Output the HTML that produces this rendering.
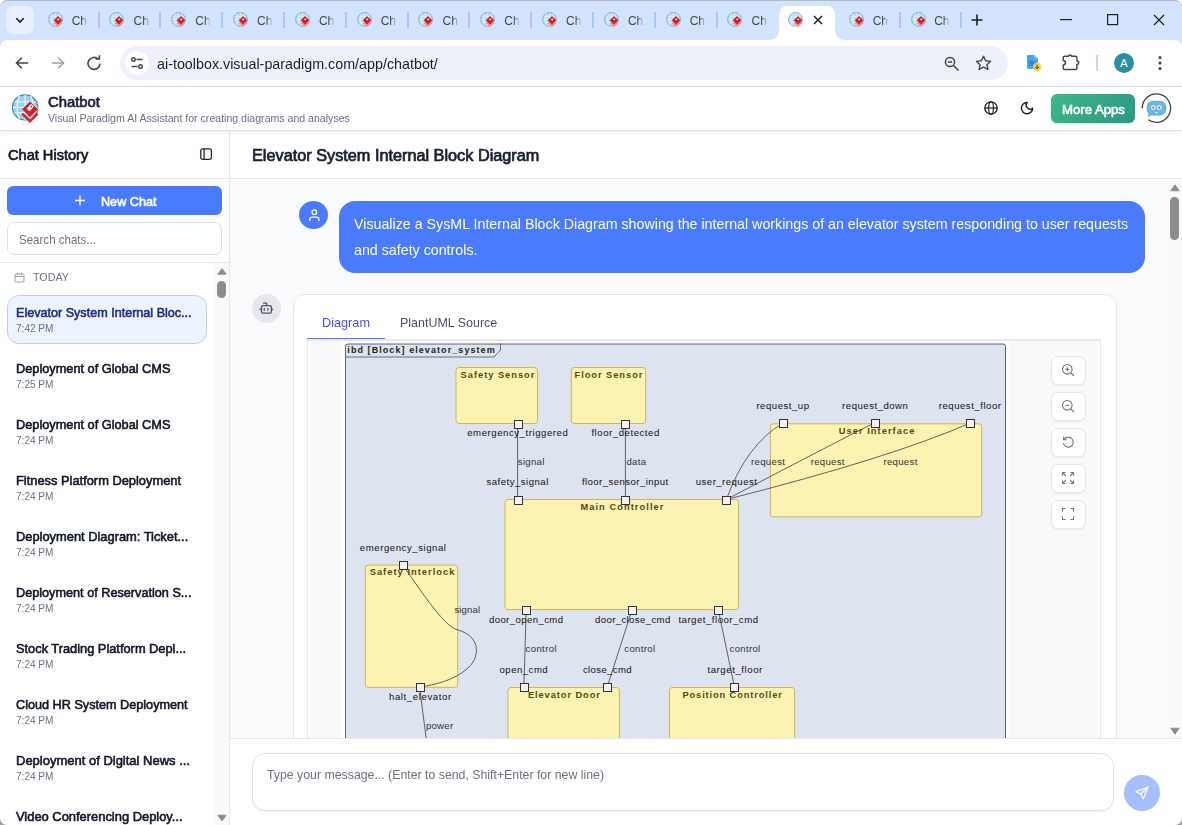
<!DOCTYPE html>
<html><head><meta charset="utf-8">
<style>
*{box-sizing:border-box;margin:0;padding:0}
html,body{width:1182px;height:825px;overflow:hidden;background:#fff;font-family:"Liberation Sans",sans-serif}
body{position:relative}
.abs{position:absolute}
.t{position:absolute;white-space:nowrap;font-family:"Liberation Sans",sans-serif}
.tsep{position:absolute;top:12px;width:2px;height:16px;background:#a8c7fa}
</style></head>
<body>
<div class="abs" style="left:0;top:0;width:1182px;height:48px;background:#d3e3fd;border-top:1.5px solid #b4b9c0;border-radius:7px 7px 0 0"></div>
<div class="abs" style="left:6px;top:6px;width:28px;height:28px;border-radius:8px;background:#e7effc"></div>
<svg class="abs" style="left:14px;top:14px" width="12" height="12" viewBox="0 0 12 12"><path d="M2.3 4.3 L6 8 L9.7 4.3" stroke="#1f1f1f" stroke-width="1.6" fill="none"/></svg>
<div class="abs" style="left:47.5px;top:12px;width:15px;height:15px"><svg width="15" height="15" viewBox="0 0 15 15"><circle cx="7.5" cy="7.4" r="6.9" fill="#b5e0f6" stroke="#8aa6b5" stroke-width="0.9"/><path d="M2.5 4.5h10M1.2 7.5h12.5M2.5 10.5h10M7.5 0.8v13.3M4.3 1.8c-1.2 3-1.2 8.3 0 11.3M10.7 1.8c1.2 3 1.2 8.3 0 11.3" stroke="#e3f4fc" stroke-width="0.7" fill="none"/><path d="M10 6.8 L14.3 11 L10 15 L5.8 11Z" fill="#ec9090"/><path d="M10 4.1 L14.3 8.3 L10 12.5 L5.7 8.3Z" fill="#d11f2b"/><path d="M10 6.2 L11.4 7.6 L10.4 8.6 L9 7.2Z" fill="#fff"/></svg></div>
<div class="abs" style="left:71.7px;top:12px;width:16px;height:16px;overflow:hidden;-webkit-mask-image:linear-gradient(to right,#000 60%,transparent 100%)"><div class="t" style="left:0px;top:3.24px;font-size:12px;line-height:12px;color:#474747;font-weight:normal;">Ch</div></div>
<div class="abs tsep" style="left:97.5px"></div>
<div class="abs" style="left:109.3px;top:12px;width:15px;height:15px"><svg width="15" height="15" viewBox="0 0 15 15"><circle cx="7.5" cy="7.4" r="6.9" fill="#b5e0f6" stroke="#8aa6b5" stroke-width="0.9"/><path d="M2.5 4.5h10M1.2 7.5h12.5M2.5 10.5h10M7.5 0.8v13.3M4.3 1.8c-1.2 3-1.2 8.3 0 11.3M10.7 1.8c1.2 3 1.2 8.3 0 11.3" stroke="#e3f4fc" stroke-width="0.7" fill="none"/><path d="M10 6.8 L14.3 11 L10 15 L5.8 11Z" fill="#ec9090"/><path d="M10 4.1 L14.3 8.3 L10 12.5 L5.7 8.3Z" fill="#d11f2b"/><path d="M10 6.2 L11.4 7.6 L10.4 8.6 L9 7.2Z" fill="#fff"/></svg></div>
<div class="abs" style="left:133.5px;top:12px;width:16px;height:16px;overflow:hidden;-webkit-mask-image:linear-gradient(to right,#000 60%,transparent 100%)"><div class="t" style="left:0px;top:3.24px;font-size:12px;line-height:12px;color:#474747;font-weight:normal;">Ch</div></div>
<div class="abs tsep" style="left:159.3px"></div>
<div class="abs" style="left:171.1px;top:12px;width:15px;height:15px"><svg width="15" height="15" viewBox="0 0 15 15"><circle cx="7.5" cy="7.4" r="6.9" fill="#b5e0f6" stroke="#8aa6b5" stroke-width="0.9"/><path d="M2.5 4.5h10M1.2 7.5h12.5M2.5 10.5h10M7.5 0.8v13.3M4.3 1.8c-1.2 3-1.2 8.3 0 11.3M10.7 1.8c1.2 3 1.2 8.3 0 11.3" stroke="#e3f4fc" stroke-width="0.7" fill="none"/><path d="M10 6.8 L14.3 11 L10 15 L5.8 11Z" fill="#ec9090"/><path d="M10 4.1 L14.3 8.3 L10 12.5 L5.7 8.3Z" fill="#d11f2b"/><path d="M10 6.2 L11.4 7.6 L10.4 8.6 L9 7.2Z" fill="#fff"/></svg></div>
<div class="abs" style="left:195.3px;top:12px;width:16px;height:16px;overflow:hidden;-webkit-mask-image:linear-gradient(to right,#000 60%,transparent 100%)"><div class="t" style="left:0px;top:3.24px;font-size:12px;line-height:12px;color:#474747;font-weight:normal;">Ch</div></div>
<div class="abs tsep" style="left:221.1px"></div>
<div class="abs" style="left:232.9px;top:12px;width:15px;height:15px"><svg width="15" height="15" viewBox="0 0 15 15"><circle cx="7.5" cy="7.4" r="6.9" fill="#b5e0f6" stroke="#8aa6b5" stroke-width="0.9"/><path d="M2.5 4.5h10M1.2 7.5h12.5M2.5 10.5h10M7.5 0.8v13.3M4.3 1.8c-1.2 3-1.2 8.3 0 11.3M10.7 1.8c1.2 3 1.2 8.3 0 11.3" stroke="#e3f4fc" stroke-width="0.7" fill="none"/><path d="M10 6.8 L14.3 11 L10 15 L5.8 11Z" fill="#ec9090"/><path d="M10 4.1 L14.3 8.3 L10 12.5 L5.7 8.3Z" fill="#d11f2b"/><path d="M10 6.2 L11.4 7.6 L10.4 8.6 L9 7.2Z" fill="#fff"/></svg></div>
<div class="abs" style="left:257.1px;top:12px;width:16px;height:16px;overflow:hidden;-webkit-mask-image:linear-gradient(to right,#000 60%,transparent 100%)"><div class="t" style="left:0px;top:3.24px;font-size:12px;line-height:12px;color:#474747;font-weight:normal;">Ch</div></div>
<div class="abs tsep" style="left:282.9px"></div>
<div class="abs" style="left:294.7px;top:12px;width:15px;height:15px"><svg width="15" height="15" viewBox="0 0 15 15"><circle cx="7.5" cy="7.4" r="6.9" fill="#b5e0f6" stroke="#8aa6b5" stroke-width="0.9"/><path d="M2.5 4.5h10M1.2 7.5h12.5M2.5 10.5h10M7.5 0.8v13.3M4.3 1.8c-1.2 3-1.2 8.3 0 11.3M10.7 1.8c1.2 3 1.2 8.3 0 11.3" stroke="#e3f4fc" stroke-width="0.7" fill="none"/><path d="M10 6.8 L14.3 11 L10 15 L5.8 11Z" fill="#ec9090"/><path d="M10 4.1 L14.3 8.3 L10 12.5 L5.7 8.3Z" fill="#d11f2b"/><path d="M10 6.2 L11.4 7.6 L10.4 8.6 L9 7.2Z" fill="#fff"/></svg></div>
<div class="abs" style="left:318.9px;top:12px;width:16px;height:16px;overflow:hidden;-webkit-mask-image:linear-gradient(to right,#000 60%,transparent 100%)"><div class="t" style="left:0px;top:3.24px;font-size:12px;line-height:12px;color:#474747;font-weight:normal;">Ch</div></div>
<div class="abs tsep" style="left:344.7px"></div>
<div class="abs" style="left:356.5px;top:12px;width:15px;height:15px"><svg width="15" height="15" viewBox="0 0 15 15"><circle cx="7.5" cy="7.4" r="6.9" fill="#b5e0f6" stroke="#8aa6b5" stroke-width="0.9"/><path d="M2.5 4.5h10M1.2 7.5h12.5M2.5 10.5h10M7.5 0.8v13.3M4.3 1.8c-1.2 3-1.2 8.3 0 11.3M10.7 1.8c1.2 3 1.2 8.3 0 11.3" stroke="#e3f4fc" stroke-width="0.7" fill="none"/><path d="M10 6.8 L14.3 11 L10 15 L5.8 11Z" fill="#ec9090"/><path d="M10 4.1 L14.3 8.3 L10 12.5 L5.7 8.3Z" fill="#d11f2b"/><path d="M10 6.2 L11.4 7.6 L10.4 8.6 L9 7.2Z" fill="#fff"/></svg></div>
<div class="abs" style="left:380.7px;top:12px;width:16px;height:16px;overflow:hidden;-webkit-mask-image:linear-gradient(to right,#000 60%,transparent 100%)"><div class="t" style="left:0px;top:3.24px;font-size:12px;line-height:12px;color:#474747;font-weight:normal;">Ch</div></div>
<div class="abs tsep" style="left:406.5px"></div>
<div class="abs" style="left:418.3px;top:12px;width:15px;height:15px"><svg width="15" height="15" viewBox="0 0 15 15"><circle cx="7.5" cy="7.4" r="6.9" fill="#b5e0f6" stroke="#8aa6b5" stroke-width="0.9"/><path d="M2.5 4.5h10M1.2 7.5h12.5M2.5 10.5h10M7.5 0.8v13.3M4.3 1.8c-1.2 3-1.2 8.3 0 11.3M10.7 1.8c1.2 3 1.2 8.3 0 11.3" stroke="#e3f4fc" stroke-width="0.7" fill="none"/><path d="M10 6.8 L14.3 11 L10 15 L5.8 11Z" fill="#ec9090"/><path d="M10 4.1 L14.3 8.3 L10 12.5 L5.7 8.3Z" fill="#d11f2b"/><path d="M10 6.2 L11.4 7.6 L10.4 8.6 L9 7.2Z" fill="#fff"/></svg></div>
<div class="abs" style="left:442.5px;top:12px;width:16px;height:16px;overflow:hidden;-webkit-mask-image:linear-gradient(to right,#000 60%,transparent 100%)"><div class="t" style="left:0px;top:3.24px;font-size:12px;line-height:12px;color:#474747;font-weight:normal;">Ch</div></div>
<div class="abs tsep" style="left:468.3px"></div>
<div class="abs" style="left:480.1px;top:12px;width:15px;height:15px"><svg width="15" height="15" viewBox="0 0 15 15"><circle cx="7.5" cy="7.4" r="6.9" fill="#b5e0f6" stroke="#8aa6b5" stroke-width="0.9"/><path d="M2.5 4.5h10M1.2 7.5h12.5M2.5 10.5h10M7.5 0.8v13.3M4.3 1.8c-1.2 3-1.2 8.3 0 11.3M10.7 1.8c1.2 3 1.2 8.3 0 11.3" stroke="#e3f4fc" stroke-width="0.7" fill="none"/><path d="M10 6.8 L14.3 11 L10 15 L5.8 11Z" fill="#ec9090"/><path d="M10 4.1 L14.3 8.3 L10 12.5 L5.7 8.3Z" fill="#d11f2b"/><path d="M10 6.2 L11.4 7.6 L10.4 8.6 L9 7.2Z" fill="#fff"/></svg></div>
<div class="abs" style="left:504.3px;top:12px;width:16px;height:16px;overflow:hidden;-webkit-mask-image:linear-gradient(to right,#000 60%,transparent 100%)"><div class="t" style="left:0px;top:3.24px;font-size:12px;line-height:12px;color:#474747;font-weight:normal;">Ch</div></div>
<div class="abs tsep" style="left:530.1px"></div>
<div class="abs" style="left:541.9px;top:12px;width:15px;height:15px"><svg width="15" height="15" viewBox="0 0 15 15"><circle cx="7.5" cy="7.4" r="6.9" fill="#b5e0f6" stroke="#8aa6b5" stroke-width="0.9"/><path d="M2.5 4.5h10M1.2 7.5h12.5M2.5 10.5h10M7.5 0.8v13.3M4.3 1.8c-1.2 3-1.2 8.3 0 11.3M10.7 1.8c1.2 3 1.2 8.3 0 11.3" stroke="#e3f4fc" stroke-width="0.7" fill="none"/><path d="M10 6.8 L14.3 11 L10 15 L5.8 11Z" fill="#ec9090"/><path d="M10 4.1 L14.3 8.3 L10 12.5 L5.7 8.3Z" fill="#d11f2b"/><path d="M10 6.2 L11.4 7.6 L10.4 8.6 L9 7.2Z" fill="#fff"/></svg></div>
<div class="abs" style="left:566.1px;top:12px;width:16px;height:16px;overflow:hidden;-webkit-mask-image:linear-gradient(to right,#000 60%,transparent 100%)"><div class="t" style="left:0px;top:3.24px;font-size:12px;line-height:12px;color:#474747;font-weight:normal;">Ch</div></div>
<div class="abs tsep" style="left:591.9px"></div>
<div class="abs" style="left:603.7px;top:12px;width:15px;height:15px"><svg width="15" height="15" viewBox="0 0 15 15"><circle cx="7.5" cy="7.4" r="6.9" fill="#b5e0f6" stroke="#8aa6b5" stroke-width="0.9"/><path d="M2.5 4.5h10M1.2 7.5h12.5M2.5 10.5h10M7.5 0.8v13.3M4.3 1.8c-1.2 3-1.2 8.3 0 11.3M10.7 1.8c1.2 3 1.2 8.3 0 11.3" stroke="#e3f4fc" stroke-width="0.7" fill="none"/><path d="M10 6.8 L14.3 11 L10 15 L5.8 11Z" fill="#ec9090"/><path d="M10 4.1 L14.3 8.3 L10 12.5 L5.7 8.3Z" fill="#d11f2b"/><path d="M10 6.2 L11.4 7.6 L10.4 8.6 L9 7.2Z" fill="#fff"/></svg></div>
<div class="abs" style="left:627.9px;top:12px;width:16px;height:16px;overflow:hidden;-webkit-mask-image:linear-gradient(to right,#000 60%,transparent 100%)"><div class="t" style="left:0px;top:3.24px;font-size:12px;line-height:12px;color:#474747;font-weight:normal;">Ch</div></div>
<div class="abs tsep" style="left:653.7px"></div>
<div class="abs" style="left:665.5px;top:12px;width:15px;height:15px"><svg width="15" height="15" viewBox="0 0 15 15"><circle cx="7.5" cy="7.4" r="6.9" fill="#b5e0f6" stroke="#8aa6b5" stroke-width="0.9"/><path d="M2.5 4.5h10M1.2 7.5h12.5M2.5 10.5h10M7.5 0.8v13.3M4.3 1.8c-1.2 3-1.2 8.3 0 11.3M10.7 1.8c1.2 3 1.2 8.3 0 11.3" stroke="#e3f4fc" stroke-width="0.7" fill="none"/><path d="M10 6.8 L14.3 11 L10 15 L5.8 11Z" fill="#ec9090"/><path d="M10 4.1 L14.3 8.3 L10 12.5 L5.7 8.3Z" fill="#d11f2b"/><path d="M10 6.2 L11.4 7.6 L10.4 8.6 L9 7.2Z" fill="#fff"/></svg></div>
<div class="abs" style="left:689.7px;top:12px;width:16px;height:16px;overflow:hidden;-webkit-mask-image:linear-gradient(to right,#000 60%,transparent 100%)"><div class="t" style="left:0px;top:3.24px;font-size:12px;line-height:12px;color:#474747;font-weight:normal;">Ch</div></div>
<div class="abs tsep" style="left:715.5px"></div>
<div class="abs" style="left:727.3px;top:12px;width:15px;height:15px"><svg width="15" height="15" viewBox="0 0 15 15"><circle cx="7.5" cy="7.4" r="6.9" fill="#b5e0f6" stroke="#8aa6b5" stroke-width="0.9"/><path d="M2.5 4.5h10M1.2 7.5h12.5M2.5 10.5h10M7.5 0.8v13.3M4.3 1.8c-1.2 3-1.2 8.3 0 11.3M10.7 1.8c1.2 3 1.2 8.3 0 11.3" stroke="#e3f4fc" stroke-width="0.7" fill="none"/><path d="M10 6.8 L14.3 11 L10 15 L5.8 11Z" fill="#ec9090"/><path d="M10 4.1 L14.3 8.3 L10 12.5 L5.7 8.3Z" fill="#d11f2b"/><path d="M10 6.2 L11.4 7.6 L10.4 8.6 L9 7.2Z" fill="#fff"/></svg></div>
<div class="abs" style="left:751.5px;top:12px;width:16px;height:16px;overflow:hidden;-webkit-mask-image:linear-gradient(to right,#000 60%,transparent 100%)"><div class="t" style="left:0px;top:3.24px;font-size:12px;line-height:12px;color:#474747;font-weight:normal;">Ch</div></div>
<svg class="abs" style="left:768px;top:5px" width="80" height="36" viewBox="0 0 80 36"><path d="M0 35 Q10 35 11 26 L11 10 Q11 1 20 1 L58 1 Q67 1 67 10 L67 26 Q68 35 78 35 L80 36 L0 36Z" fill="#fff"/></svg>
<div class="abs" style="left:788px;top:12px;width:15px;height:15px"><svg width="15" height="15" viewBox="0 0 15 15"><circle cx="7.5" cy="7.4" r="6.9" fill="#b5e0f6" stroke="#8aa6b5" stroke-width="0.9"/><path d="M2.5 4.5h10M1.2 7.5h12.5M2.5 10.5h10M7.5 0.8v13.3M4.3 1.8c-1.2 3-1.2 8.3 0 11.3M10.7 1.8c1.2 3 1.2 8.3 0 11.3" stroke="#e3f4fc" stroke-width="0.7" fill="none"/><path d="M10 6.8 L14.3 11 L10 15 L5.8 11Z" fill="#ec9090"/><path d="M10 4.1 L14.3 8.3 L10 12.5 L5.7 8.3Z" fill="#d11f2b"/><path d="M10 6.2 L11.4 7.6 L10.4 8.6 L9 7.2Z" fill="#fff"/></svg></div>
<svg class="abs" style="left:813px;top:15px" width="10" height="10" viewBox="0 0 10 10"><path d="M1 1L9 9M9 1L1 9" stroke="#1f1f1f" stroke-width="1.5"/></svg>
<div class="abs" style="left:849px;top:12px;width:15px;height:15px"><svg width="15" height="15" viewBox="0 0 15 15"><circle cx="7.5" cy="7.4" r="6.9" fill="#b5e0f6" stroke="#8aa6b5" stroke-width="0.9"/><path d="M2.5 4.5h10M1.2 7.5h12.5M2.5 10.5h10M7.5 0.8v13.3M4.3 1.8c-1.2 3-1.2 8.3 0 11.3M10.7 1.8c1.2 3 1.2 8.3 0 11.3" stroke="#e3f4fc" stroke-width="0.7" fill="none"/><path d="M10 6.8 L14.3 11 L10 15 L5.8 11Z" fill="#ec9090"/><path d="M10 4.1 L14.3 8.3 L10 12.5 L5.7 8.3Z" fill="#d11f2b"/><path d="M10 6.2 L11.4 7.6 L10.4 8.6 L9 7.2Z" fill="#fff"/></svg></div>
<div class="abs" style="left:872.7px;top:12px;width:16px;height:16px;overflow:hidden;-webkit-mask-image:linear-gradient(to right,#000 60%,transparent 100%)"><div class="t" style="left:0px;top:3.24px;font-size:12px;line-height:12px;color:#474747;font-weight:normal;">Ch</div></div>
<div class="abs tsep" style="left:898.5px"></div>
<div class="abs" style="left:910.5px;top:12px;width:15px;height:15px"><svg width="15" height="15" viewBox="0 0 15 15"><circle cx="7.5" cy="7.4" r="6.9" fill="#b5e0f6" stroke="#8aa6b5" stroke-width="0.9"/><path d="M2.5 4.5h10M1.2 7.5h12.5M2.5 10.5h10M7.5 0.8v13.3M4.3 1.8c-1.2 3-1.2 8.3 0 11.3M10.7 1.8c1.2 3 1.2 8.3 0 11.3" stroke="#e3f4fc" stroke-width="0.7" fill="none"/><path d="M10 6.8 L14.3 11 L10 15 L5.8 11Z" fill="#ec9090"/><path d="M10 4.1 L14.3 8.3 L10 12.5 L5.7 8.3Z" fill="#d11f2b"/><path d="M10 6.2 L11.4 7.6 L10.4 8.6 L9 7.2Z" fill="#fff"/></svg></div>
<div class="abs" style="left:934.2px;top:12px;width:16px;height:16px;overflow:hidden;-webkit-mask-image:linear-gradient(to right,#000 60%,transparent 100%)"><div class="t" style="left:0px;top:3.24px;font-size:12px;line-height:12px;color:#474747;font-weight:normal;">Ch</div></div>
<div class="abs tsep" style="left:960.0px"></div>
<svg class="abs" style="left:970px;top:13px" width="14" height="14" viewBox="0 0 14 14"><path d="M7 1.5V12.5M1.5 7H12.5" stroke="#1f1f1f" stroke-width="1.6"/></svg>
<svg class="abs" style="left:1060px;top:19px" width="14" height="2"><rect width="12" height="1.2" fill="#1f1f1f"/></svg>
<svg class="abs" style="left:1107px;top:14px" width="12" height="12"><rect x="0.6" y="0.6" width="10" height="10" fill="none" stroke="#1f1f1f" stroke-width="1.2"/></svg>
<svg class="abs" style="left:1153px;top:14px" width="12" height="12" viewBox="0 0 12 12"><path d="M1 1L11 11M11 1L1 11" stroke="#1f1f1f" stroke-width="1.2"/></svg>
<div class="abs" style="left:0;top:40px;width:1182px;height:47px;background:#fff;border-radius:7px 7px 0 0"></div>
<svg class="abs" style="left:13px;top:54px" width="18" height="18" viewBox="0 0 18 18"><path d="M15.2 9H3.5M8.8 3.8L3.5 9l5.3 5.2" stroke="#474747" stroke-width="1.6" fill="none"/></svg>
<svg class="abs" style="left:49px;top:54px" width="18" height="18" viewBox="0 0 18 18"><path d="M2.8 9h11.7M9.2 3.8L14.5 9l-5.3 5.2" stroke="#a3a3a3" stroke-width="1.6" fill="none"/></svg>
<svg class="abs" style="left:85px;top:54px" width="18" height="18" viewBox="0 0 18 18"><path d="M13.3 5.2A6 6 0 1 0 15 9.6" stroke="#474747" stroke-width="1.6" fill="none"/><path d="M10.6 4.9H14.4V1.3" stroke="#474747" stroke-width="1.6" fill="none"/></svg>
<div class="abs" style="left:120px;top:46px;width:888px;height:34px;border-radius:17px;background:#edf2fa"></div>
<div class="abs" style="left:125px;top:51px;width:24px;height:24px;border-radius:12px;background:#fff"></div>
<svg class="abs" style="left:129px;top:55px" width="16" height="16" viewBox="0 0 16 16"><circle cx="4.5" cy="4.5" r="1.8" fill="none" stroke="#474747" stroke-width="1.4"/><path d="M7.5 4.5h6M2.5 11.5h6" stroke="#474747" stroke-width="1.4"/><circle cx="11.5" cy="11.5" r="1.8" fill="none" stroke="#474747" stroke-width="1.4"/></svg>
<div class="t" style="left:157px;top:56.51px;font-size:14.4px;line-height:14.4px;color:#1f1f1f;font-weight:normal;transform:scaleX(0.9945);transform-origin:0 0;">ai-toolbox.visual-paradigm.com/app/chatbot/</div>
<svg class="abs" style="left:944px;top:56px" width="16" height="16" viewBox="0 0 16 16"><circle cx="6" cy="6" r="4.6" fill="none" stroke="#474747" stroke-width="1.5"/><path d="M9.5 9.5L14.5 14.5M3.8 6h4.4" stroke="#474747" stroke-width="1.5"/></svg>
<svg class="abs" style="left:975px;top:55px" width="17" height="16" viewBox="0 0 17 16"><path d="M8.5 1.3l2.1 4.5 4.9.6-3.6 3.3 1 4.8-4.4-2.4-4.4 2.4 1-4.8L1.5 6.4l4.9-.6z" fill="none" stroke="#474747" stroke-width="1.4" stroke-linejoin="round"/></svg>
<svg class="abs" style="left:1026px;top:54px" width="17" height="18" viewBox="0 0 17 18"><path d="M1 2Q1 1 2 1H8.2L12 4.8V14Q12 15 11 15H2Q1 15 1 14Z" fill="#4aa3f0"/><path d="M8.2 1V4.8H12Z" fill="#52e0c4"/><path d="M3 7.5h5M3 9.3h5M3 11.1h4" stroke="#2a5ea8" stroke-width="0.8"/><circle cx="11.2" cy="13" r="4.2" fill="#f5d533"/><path d="M11.2 10.6v4.2M9.4 13l1.8 1.8 1.8-1.8" stroke="#1f3a6b" stroke-width="1" fill="none"/></svg>
<svg class="abs" style="left:1062px;top:54px" width="18" height="17" viewBox="0 0 18 17"><path d="M2.7 2.2H6.3A1.8 1.8 0 0 1 9.7 2.2H13.4Q14.9 2.2 14.9 3.7V7A1.8 1.8 0 0 1 14.9 10.6V14Q14.9 15.5 13.4 15.5H2.7Q1.2 15.5 1.2 14V11A2.2 2.2 0 0 0 1.2 6.6V3.7Q1.2 2.2 2.7 2.2Z" fill="none" stroke="#474747" stroke-width="1.5" stroke-linejoin="round"/></svg>
<div class="abs" style="left:1096px;top:55px;width:1.5px;height:16px;background:#c7d7f5"></div>
<div class="abs" style="left:1114px;top:53px;width:20px;height:20px;border-radius:10px;background:#2a8fa0"></div>
<div class="t" style="left:1120.2px;top:57.99px;font-size:11px;line-height:11px;color:#fff;font-weight:normal;">A</div>
<svg class="abs" style="left:1157px;top:55px" width="6" height="16"><circle cx="3" cy="2.5" r="1.6" fill="#474747"/><circle cx="3" cy="8" r="1.6" fill="#474747"/><circle cx="3" cy="13.5" r="1.6" fill="#474747"/></svg>
<div class="abs" style="left:0;top:86px;width:1182px;height:1px;background:#d6d9de"></div>
<div class="abs" style="left:0;top:87px;width:1182px;height:43px;background:#fff;box-shadow:0 1px 0 #e1e4e8,0 2px 3px rgba(0,0,0,0.07);z-index:2"></div>
<svg class="abs" style="left:11px;top:93px;z-index:3" width="30" height="30" viewBox="0 0 30 30"><circle cx="14.1" cy="14.4" r="12.6" fill="#94d3f4" stroke="#3f7b91" stroke-width="1.1"/><path d="M3.5 9h21.2M1.8 14.4h24.6M3.5 19.8h21.2M14.1 1.8v25.2M8.6 2.8c-3.2 6-3.2 17.2 0 23.2M19.6 2.8c3.2 6 3.2 17.2 0 23.2" stroke="#eef9fe" stroke-width="1.2" fill="none"/><path d="M11.3 20.6 L19 28.2 L26.7 20.6" stroke="#d32a33" stroke-width="2.6" fill="none"/><path d="M19 8 L27.3 16.3 L19 24.6 L10.7 16.3Z" fill="#d0202a" stroke="#fff" stroke-width="0.6"/><path d="M20.2 10.8 L23 13.6 L18.4 18.2 L15.6 15.4Z" fill="#fff"/><circle cx="20.3" cy="13.7" r="0.9" fill="#d0202a"/></svg>
<div style="position:absolute;left:0;top:87px;z-index:3"><div class="t" style="left:48px;top:9.02px;font-size:13.8px;line-height:13.8px;color:#1a1f36;font-weight:normal;transform:scaleX(1.0758);transform-origin:0 0;-webkit-text-stroke:0.62px #1a1f36;">Chatbot</div><div class="t" style="left:48px;top:25.48px;font-size:11.6px;line-height:11.6px;color:#667085;font-weight:normal;transform:scaleX(0.9118);transform-origin:0 0;">Visual Paradigm AI Assistant for creating diagrams and analyses</div></div>
<svg class="abs" style="left:984px;top:101px;z-index:3" width="14" height="14" viewBox="0 0 14 14"><circle cx="7" cy="7" r="6.2" fill="none" stroke="#1a1a1a" stroke-width="1.3"/><ellipse cx="7" cy="7" rx="2.4" ry="6.2" fill="none" stroke="#1a1a1a" stroke-width="1.1"/><path d="M0.8 7h12.4" stroke="#1a1a1a" stroke-width="1.2"/></svg>
<svg class="abs" style="left:1020px;top:100.8px;z-index:3" width="14" height="14" viewBox="0 0 14 14"><path d="M7.3 1.5A5.6 5.6 0 1 0 12.6 7.2A3.9 3.9 0 0 1 7.3 1.5Z" fill="none" stroke="#1a1a1a" stroke-width="1.4" stroke-linejoin="round"/></svg>
<div class="abs" style="left:1051px;top:94px;width:84px;height:29px;border-radius:6px;background:linear-gradient(135deg,#3dba85,#2b9587);z-index:3;box-shadow:0 1px 2px rgba(0,0,0,.15)"></div>
<div style="position:absolute;left:0;top:0;z-index:4"><div class="t" style="left:1062px;top:103.03px;font-size:13.2px;line-height:13.2px;color:#fff;font-weight:normal;transform:scaleX(0.9984);transform-origin:0 0;-webkit-text-stroke:0.59px #fff;">More Apps</div></div>
<svg class="abs" style="left:1141px;top:93px;z-index:3" width="31" height="31" viewBox="0 0 31 31"><path d="M1.2 15.3A14.2 14.2 0 1 1 7.3 26.8" fill="none" stroke="#3a4250" stroke-width="1.3"/><path d="M8 18.5 L6.8 24.3 L12 21.5Z" fill="#68b6e6"/><rect x="6" y="8.1" width="19" height="14.2" rx="6" fill="#68b6e6" stroke="#5a9cc6" stroke-width="0.5"/><circle cx="12.3" cy="14.5" r="2.3" fill="#fff"/><circle cx="18.3" cy="14.5" r="2.3" fill="#fff"/><circle cx="12.3" cy="14.6" r="1.1" fill="#5a6570"/><circle cx="18.3" cy="14.6" r="1.1" fill="#5a6570"/><ellipse cx="15.4" cy="19.6" rx="1.6" ry="0.7" fill="#e6f4fc"/></svg>
<div class="abs" style="left:0;top:131px;width:229px;height:694px;background:#fff"></div>
<div class="abs" style="left:229px;top:131px;width:1px;height:694px;background:#e5e7eb"></div>
<div class="t" style="left:8px;top:147.86px;font-size:14.1px;line-height:14.1px;color:#111827;font-weight:normal;transform:scaleX(1.0352);transform-origin:0 0;-webkit-text-stroke:0.63px #111827;">Chat History</div>
<svg class="abs" style="left:200px;top:148px" width="13" height="13" viewBox="0 0 13 13"><rect x="0.8" y="0.8" width="10.6" height="10.6" rx="1.8" fill="none" stroke="#1f2937" stroke-width="1.3"/><path d="M4.1 0.8v10.6" stroke="#1f2937" stroke-width="1.3"/></svg>
<div class="abs" style="left:0;top:178px;width:229px;height:1px;background:#e5e7eb"></div>
<div class="abs" style="left:7px;top:186px;width:215px;height:29px;border-radius:6px;background:#4a7bfd"></div>
<svg class="abs" style="left:74px;top:195px" width="12" height="12" viewBox="0 0 12 12"><path d="M6 0.5v10M1 5.5h10" stroke="#fff" stroke-width="1.3"/></svg>
<div class="t" style="left:101px;top:194.69px;font-size:13.6px;line-height:13.6px;color:#fff;font-weight:normal;transform:scaleX(0.9294);transform-origin:0 0;-webkit-text-stroke:0.61px #fff;">New Chat</div>
<div class="abs" style="left:7px;top:222px;width:215px;height:33px;border-radius:7px;background:#fff;border:1px solid #dcdfe4"></div>
<div class="t" style="left:19px;top:232.76px;font-size:13.4px;line-height:13.4px;color:#6b7280;font-weight:normal;transform:scaleX(0.8615);transform-origin:0 0;">Search chats...</div>
<div class="abs" style="left:0;top:262px;width:229px;height:1px;background:#e5e7eb"></div>
<div class="abs" style="left:214px;top:263px;width:15px;height:562px;background:#fafafa"></div>
<svg class="abs" style="left:216.5px;top:268px" width="10" height="8"><path d="M0.8 6.2 L5 0.6 L9.2 6.2Z" fill="#8c8c8c" stroke="#8c8c8c" stroke-width="0.9" stroke-linejoin="round"/></svg>
<div class="abs" style="left:217px;top:281px;width:9px;height:17px;border-radius:4.5px;background:#8c8c8c"></div>
<svg class="abs" style="left:216.5px;top:814px" width="10" height="8"><path d="M0.8 1.2 L5 6.8 L9.2 1.2Z" fill="#8c8c8c" stroke="#8c8c8c" stroke-width="0.9" stroke-linejoin="round"/></svg>
<svg class="abs" style="left:14px;top:272px" width="11" height="11" viewBox="0 0 11 11"><rect x="1" y="2" width="9" height="8" rx="1" fill="none" stroke="#9ca3af" stroke-width="1"/><path d="M1 4.5h9M3.5 0.5v2.5M7.5 0.5v2.5" stroke="#9ca3af" stroke-width="1"/></svg>
<div class="t" style="left:33px;top:271.52px;font-size:11.2px;line-height:11.2px;color:#6b7280;font-weight:normal;transform:scaleX(0.9587);transform-origin:0 0;">TODAY</div>
<div class="abs" style="left:7px;top:295px;width:200px;height:49px;border-radius:12px;background:#eef4ff;border:1px solid #b9cdf8"></div>
<div class="t" style="left:16px;top:305.71px;font-size:13.1px;line-height:13.1px;color:#1e2f80;font-weight:normal;transform:scaleX(0.9614);transform-origin:0 0;-webkit-text-stroke:0.59px #1e2f80;">Elevator System Internal Bloc...</div>
<div class="t" style="left:16px;top:322.52px;font-size:11.2px;line-height:11.2px;color:#6b7280;font-weight:normal;transform:scaleX(0.8990);transform-origin:0 0;">7:42 PM</div>
<div class="t" style="left:16px;top:361.81px;font-size:13.1px;line-height:13.1px;color:#111827;font-weight:normal;transform:scaleX(0.9734);transform-origin:0 0;-webkit-text-stroke:0.59px #111827;">Deployment of Global CMS</div>
<div class="t" style="left:16px;top:378.52px;font-size:11.2px;line-height:11.2px;color:#6b7280;font-weight:normal;transform:scaleX(0.8990);transform-origin:0 0;">7:25 PM</div>
<div class="t" style="left:16px;top:417.81px;font-size:13.1px;line-height:13.1px;color:#111827;font-weight:normal;transform:scaleX(0.9734);transform-origin:0 0;-webkit-text-stroke:0.59px #111827;">Deployment of Global CMS</div>
<div class="t" style="left:16px;top:434.52px;font-size:11.2px;line-height:11.2px;color:#6b7280;font-weight:normal;transform:scaleX(0.8990);transform-origin:0 0;">7:24 PM</div>
<div class="t" style="left:16px;top:473.81px;font-size:13.1px;line-height:13.1px;color:#111827;font-weight:normal;transform:scaleX(0.9817);transform-origin:0 0;-webkit-text-stroke:0.59px #111827;">Fitness Platform Deployment</div>
<div class="t" style="left:16px;top:490.52px;font-size:11.2px;line-height:11.2px;color:#6b7280;font-weight:normal;transform:scaleX(0.8990);transform-origin:0 0;">7:24 PM</div>
<div class="t" style="left:16px;top:529.81px;font-size:13.1px;line-height:13.1px;color:#111827;font-weight:normal;transform:scaleX(0.9820);transform-origin:0 0;-webkit-text-stroke:0.59px #111827;">Deployment Diagram: Ticket...</div>
<div class="t" style="left:16px;top:546.52px;font-size:11.2px;line-height:11.2px;color:#6b7280;font-weight:normal;transform:scaleX(0.8990);transform-origin:0 0;">7:24 PM</div>
<div class="t" style="left:16px;top:585.81px;font-size:13.1px;line-height:13.1px;color:#111827;font-weight:normal;transform:scaleX(0.9680);transform-origin:0 0;-webkit-text-stroke:0.59px #111827;">Deployment of Reservation S...</div>
<div class="t" style="left:16px;top:602.52px;font-size:11.2px;line-height:11.2px;color:#6b7280;font-weight:normal;transform:scaleX(0.8990);transform-origin:0 0;">7:24 PM</div>
<div class="t" style="left:16px;top:641.81px;font-size:13.1px;line-height:13.1px;color:#111827;font-weight:normal;transform:scaleX(0.9781);transform-origin:0 0;-webkit-text-stroke:0.59px #111827;">Stock Trading Platform Depl...</div>
<div class="t" style="left:16px;top:658.52px;font-size:11.2px;line-height:11.2px;color:#6b7280;font-weight:normal;transform:scaleX(0.8990);transform-origin:0 0;">7:24 PM</div>
<div class="t" style="left:16px;top:697.81px;font-size:13.1px;line-height:13.1px;color:#111827;font-weight:normal;transform:scaleX(0.9665);transform-origin:0 0;-webkit-text-stroke:0.59px #111827;">Cloud HR System Deployment</div>
<div class="t" style="left:16px;top:714.52px;font-size:11.2px;line-height:11.2px;color:#6b7280;font-weight:normal;transform:scaleX(0.8990);transform-origin:0 0;">7:24 PM</div>
<div class="t" style="left:16px;top:753.81px;font-size:13.1px;line-height:13.1px;color:#111827;font-weight:normal;transform:scaleX(0.9922);transform-origin:0 0;-webkit-text-stroke:0.59px #111827;">Deployment of Digital News ...</div>
<div class="t" style="left:16px;top:770.52px;font-size:11.2px;line-height:11.2px;color:#6b7280;font-weight:normal;transform:scaleX(0.8990);transform-origin:0 0;">7:24 PM</div>
<div class="t" style="left:16px;top:809.81px;font-size:13.1px;line-height:13.1px;color:#111827;font-weight:normal;transform:scaleX(0.9852);transform-origin:0 0;-webkit-text-stroke:0.59px #111827;">Video Conferencing Deploy...</div>
<div class="t" style="left:16px;top:826.52px;font-size:11.2px;line-height:11.2px;color:#6b7280;font-weight:normal;transform:scaleX(0.8990);transform-origin:0 0;">7:24 PM</div>
<div class="abs" style="left:230px;top:131px;width:952px;height:47px;background:#fff"></div>
<div class="t" style="left:252px;top:147.74px;font-size:15.9px;line-height:15.9px;color:#1a2035;font-weight:normal;transform:scaleX(1.0231);transform-origin:0 0;-webkit-text-stroke:0.72px #1a2035;">Elevator System Internal Block Diagram</div>
<div class="abs" style="left:230px;top:178px;width:952px;height:1px;background:#e5e7eb"></div>
<div class="abs" style="left:230px;top:179px;width:952px;height:559px;background:#fafbfc"></div>
<div class="abs" style="left:299px;top:201px;width:29px;height:28px;border-radius:50%;background:#4a7bfd"></div>
<svg class="abs" style="left:306px;top:207px" width="15" height="15" viewBox="0 0 15 15"><circle cx="8.3" cy="5.2" r="2.3" fill="none" stroke="#fff" stroke-width="1.2"/><path d="M3.7 14V12.6Q3.7 10.2 6.3 10.2H10.3Q12.9 10.2 12.9 12.6V14" fill="none" stroke="#fff" stroke-width="1.2"/></svg>
<div class="abs" style="left:339px;top:201px;width:806px;height:72px;border-radius:16px;background:#4a7bfd"></div>
<div class="t" style="left:353.6px;top:216.84px;font-size:14.6px;line-height:14.6px;color:#fff;font-weight:normal;transform:scaleX(0.9757);transform-origin:0 0;">Visualize a SysML Internal Block Diagram showing the internal workings of an elevator system responding to user requests</div>
<div class="t" style="left:353.6px;top:242.84px;font-size:14.6px;line-height:14.6px;color:#fff;font-weight:normal;transform:scaleX(0.9757);transform-origin:0 0;">and safety controls.</div>
<div class="abs" style="left:252px;top:294px;width:29px;height:29px;border-radius:50%;background:#e5e7eb"></div>
<svg class="abs" style="left:259px;top:301px" width="15" height="15" viewBox="0 0 15 15"><rect x="2.5" y="4.6" width="9.9" height="7.6" rx="1.6" fill="none" stroke="#4b5563" stroke-width="1.3"/><path d="M7.6 4.6V2.1H4.1M0.4 8.4H2.2M12.7 8.4H14.2M5.3 7V9.8M8.9 7V9.8" fill="none" stroke="#4b5563" stroke-width="1.2"/></svg>
<div class="abs" style="left:293px;top:294px;width:824px;height:520px;border-radius:12px;background:#fff;border:1px solid #e5e7eb"></div>
<div class="t" style="left:322.3px;top:315.96px;font-size:13.4px;line-height:13.4px;color:#4f4fe6;font-weight:normal;transform:scaleX(0.9479);transform-origin:0 0;">Diagram</div>
<div class="t" style="left:399.6px;top:315.96px;font-size:13.4px;line-height:13.4px;color:#4b5563;font-weight:normal;transform:scaleX(0.9309);transform-origin:0 0;">PlantUML Source</div>
<div class="abs" style="left:307px;top:339px;width:794px;height:1.5px;background:#e8e9ec"></div>
<div class="abs" style="left:307px;top:337.6px;width:78px;height:1.6px;background:#4a7bfd"></div>
<div class="abs" style="left:307px;top:340px;width:1px;height:398px;background:#e5e7eb"></div>
<div class="abs" style="left:308px;top:340.5px;width:793px;height:398px;background:#f8f9fb;border-right:1px solid #e5e7eb;overflow:hidden">
<svg class="abs" style="left:-308px;top:-340.5px" width="1182" height="825" viewBox="0 0 1182 825"><rect x="341" y="341" width="668" height="420" fill="#fff"/>
<rect x="345.5" y="344" width="660" height="420" rx="2.5" fill="#dde4ef" stroke="#5b6372" stroke-width="1"/>
<path d="M345.5 357 H494 L500.5 350 V343.5" fill="none" stroke="#5b6372" stroke-width="0.9"/>
<text x="347.3" y="352.8" font-family="Liberation Sans" font-size="9" font-weight="bold" fill="#222" textLength="147.4" lengthAdjust="spacing">ibd [Block] elevator_system</text>
<rect x="456" y="367.5" width="81.5" height="56.0" rx="3" fill="#fcf3b3" stroke="#cfb457" stroke-width="1"/>
<rect x="571.3" y="367.5" width="74.4" height="56.0" rx="3" fill="#fcf3b3" stroke="#cfb457" stroke-width="1"/>
<rect x="505" y="499.5" width="233.5" height="110.0" rx="3" fill="#fcf3b3" stroke="#cfb457" stroke-width="1"/>
<rect x="770.4" y="423.8" width="211.3" height="93.0" rx="3" fill="#fcf3b3" stroke="#cfb457" stroke-width="1"/>
<rect x="365.4" y="565.1" width="92.3" height="122.2" rx="3" fill="#fcf3b3" stroke="#cfb457" stroke-width="1"/>
<rect x="508" y="687.5" width="111.4" height="112.5" rx="3" fill="#fcf3b3" stroke="#cfb457" stroke-width="1"/>
<rect x="669.5" y="687.5" width="125.1" height="112.5" rx="3" fill="#fcf3b3" stroke="#cfb457" stroke-width="1"/>
<path d="M517.6 423.5V499.5" fill="none" stroke="#5a5a5a" stroke-width="0.95"/>
<path d="M625.4 423.5V499.5" fill="none" stroke="#5a5a5a" stroke-width="0.95"/>
<path d="M726.4 499.5Q746 445 782.7 423.3" fill="none" stroke="#5a5a5a" stroke-width="0.95"/>
<path d="M726.4 499.5Q878 420 874.8 423.3" fill="none" stroke="#5a5a5a" stroke-width="0.95"/>
<path d="M726.4 499.5Q890 458 969.6 423.3" fill="none" stroke="#5a5a5a" stroke-width="0.95"/>
<path d="M402.8 565C425 597 445 627 458 630C480 636 481 656 468 668C455 680 435 685 419.6 687" fill="none" stroke="#5a5a5a" stroke-width="0.95"/>
<path d="M526.2 609.5L523.9 687" fill="none" stroke="#5a5a5a" stroke-width="0.95"/>
<path d="M632.1 609.5L607.2 687" fill="none" stroke="#5a5a5a" stroke-width="0.95"/>
<path d="M718.2 609.5L734.5 687" fill="none" stroke="#5a5a5a" stroke-width="0.95"/>
<path d="M419.6 687L427 745" fill="none" stroke="#5a5a5a" stroke-width="0.95"/>
<text x="460.6" y="378.2" font-family="Liberation Sans" font-size="9.3" font-weight="bold" fill="#554a14" textLength="73.7" lengthAdjust="spacing">Safety Sensor</text>
<text x="574.5" y="377.8" font-family="Liberation Sans" font-size="9.3" font-weight="bold" fill="#554a14" textLength="67.9" lengthAdjust="spacing">Floor Sensor</text>
<text x="580.4" y="510.3" font-family="Liberation Sans" font-size="9.3" font-weight="bold" fill="#554a14" textLength="83.0" lengthAdjust="spacing">Main Controller</text>
<text x="838.7" y="433.9" font-family="Liberation Sans" font-size="9.3" font-weight="bold" fill="#554a14" textLength="75.6" lengthAdjust="spacing">User Interface</text>
<text x="369.7" y="575" font-family="Liberation Sans" font-size="9.3" font-weight="bold" fill="#554a14" textLength="84.7" lengthAdjust="spacing">Safety Interlock</text>
<text x="527.9" y="697.7" font-family="Liberation Sans" font-size="9.3" font-weight="bold" fill="#554a14" textLength="72.0" lengthAdjust="spacing">Elevator Door</text>
<text x="682.5" y="697.7" font-family="Liberation Sans" font-size="9.3" font-weight="bold" fill="#554a14" textLength="99.3" lengthAdjust="spacing">Position Controller</text>
<rect x="514.5" y="420.5" width="8" height="8" fill="#f3f3f3" stroke="#333" stroke-width="1"/>
<rect x="621.5" y="420.5" width="8" height="8" fill="#f3f3f3" stroke="#333" stroke-width="1"/>
<rect x="514.5" y="496.5" width="8" height="8" fill="#f3f3f3" stroke="#333" stroke-width="1"/>
<rect x="621.5" y="496.5" width="8" height="8" fill="#f3f3f3" stroke="#333" stroke-width="1"/>
<rect x="722.5" y="496.5" width="8" height="8" fill="#f3f3f3" stroke="#333" stroke-width="1"/>
<rect x="779.5" y="419.5" width="8" height="8" fill="#f3f3f3" stroke="#333" stroke-width="1"/>
<rect x="871.5" y="419.5" width="8" height="8" fill="#f3f3f3" stroke="#333" stroke-width="1"/>
<rect x="966.5" y="419.5" width="8" height="8" fill="#f3f3f3" stroke="#333" stroke-width="1"/>
<rect x="522.5" y="606.5" width="8" height="8" fill="#f3f3f3" stroke="#333" stroke-width="1"/>
<rect x="628.5" y="606.5" width="8" height="8" fill="#f3f3f3" stroke="#333" stroke-width="1"/>
<rect x="714.5" y="606.5" width="8" height="8" fill="#f3f3f3" stroke="#333" stroke-width="1"/>
<rect x="399.5" y="561.5" width="8" height="8" fill="#f3f3f3" stroke="#333" stroke-width="1"/>
<rect x="416.5" y="683.5" width="8" height="8" fill="#f3f3f3" stroke="#333" stroke-width="1"/>
<rect x="520.5" y="683.5" width="8" height="8" fill="#f3f3f3" stroke="#333" stroke-width="1"/>
<rect x="603.5" y="683.5" width="8" height="8" fill="#f3f3f3" stroke="#333" stroke-width="1"/>
<rect x="730.5" y="683.5" width="8" height="8" fill="#f3f3f3" stroke="#333" stroke-width="1"/>
<text x="467.2" y="436.2" font-family="Liberation Sans" font-size="9.6" font-weight="normal" fill="#111" textLength="100.6" lengthAdjust="spacing">emergency_triggered</text>
<text x="591.4" y="436.0" font-family="Liberation Sans" font-size="9.6" font-weight="normal" fill="#111" textLength="67.9" lengthAdjust="spacing">floor_detected</text>
<text x="517.8" y="465" font-family="Liberation Sans" font-size="9.6" font-weight="normal" fill="#333" textLength="26.5" lengthAdjust="spacing">signal</text>
<text x="626.5" y="464.7" font-family="Liberation Sans" font-size="9.6" font-weight="normal" fill="#333" textLength="19.5" lengthAdjust="spacing">data</text>
<text x="486.5" y="485.3" font-family="Liberation Sans" font-size="9.6" font-weight="normal" fill="#111" textLength="61.8" lengthAdjust="spacing">safety_signal</text>
<text x="581.9" y="485" font-family="Liberation Sans" font-size="9.6" font-weight="normal" fill="#111" textLength="86.3" lengthAdjust="spacing">floor_sensor_input</text>
<text x="695.8" y="485" font-family="Liberation Sans" font-size="9.6" font-weight="normal" fill="#111" textLength="61.1" lengthAdjust="spacing">user_request</text>
<text x="756.4" y="409.4" font-family="Liberation Sans" font-size="9.6" font-weight="normal" fill="#111" textLength="52.6" lengthAdjust="spacing">request_up</text>
<text x="842.1" y="409.4" font-family="Liberation Sans" font-size="9.6" font-weight="normal" fill="#111" textLength="65.8" lengthAdjust="spacing">request_down</text>
<text x="938.7" y="409.4" font-family="Liberation Sans" font-size="9.6" font-weight="normal" fill="#111" textLength="62.3" lengthAdjust="spacing">request_floor</text>
<text x="751" y="465" font-family="Liberation Sans" font-size="9.6" font-weight="normal" fill="#333" textLength="34.0" lengthAdjust="spacing">request</text>
<text x="810.8" y="465" font-family="Liberation Sans" font-size="9.6" font-weight="normal" fill="#333" textLength="33.6" lengthAdjust="spacing">request</text>
<text x="883.4" y="465" font-family="Liberation Sans" font-size="9.6" font-weight="normal" fill="#333" textLength="33.9" lengthAdjust="spacing">request</text>
<text x="359.8" y="550.9" font-family="Liberation Sans" font-size="9.6" font-weight="normal" fill="#111" textLength="86.2" lengthAdjust="spacing">emergency_signal</text>
<text x="454.4" y="613.2" font-family="Liberation Sans" font-size="9.6" font-weight="normal" fill="#333" textLength="25.7" lengthAdjust="spacing">signal</text>
<text x="488.9" y="622.5" font-family="Liberation Sans" font-size="9.6" font-weight="normal" fill="#111" textLength="74.2" lengthAdjust="spacing">door_open_cmd</text>
<text x="595" y="622.5" font-family="Liberation Sans" font-size="9.6" font-weight="normal" fill="#111" textLength="75.3" lengthAdjust="spacing">door_close_cmd</text>
<text x="678.4" y="622.5" font-family="Liberation Sans" font-size="9.6" font-weight="normal" fill="#111" textLength="79.6" lengthAdjust="spacing">target_floor_cmd</text>
<text x="525.5" y="651.5" font-family="Liberation Sans" font-size="9.6" font-weight="normal" fill="#333" textLength="31.1" lengthAdjust="spacing">control</text>
<text x="624.3" y="651.5" font-family="Liberation Sans" font-size="9.6" font-weight="normal" fill="#333" textLength="30.8" lengthAdjust="spacing">control</text>
<text x="729.6" y="651.5" font-family="Liberation Sans" font-size="9.6" font-weight="normal" fill="#333" textLength="30.6" lengthAdjust="spacing">control</text>
<text x="499.5" y="672.6" font-family="Liberation Sans" font-size="9.6" font-weight="normal" fill="#111" textLength="48.2" lengthAdjust="spacing">open_cmd</text>
<text x="582.9" y="672.6" font-family="Liberation Sans" font-size="9.6" font-weight="normal" fill="#111" textLength="48.7" lengthAdjust="spacing">close_cmd</text>
<text x="707.4" y="672.6" font-family="Liberation Sans" font-size="9.6" font-weight="normal" fill="#111" textLength="54.9" lengthAdjust="spacing">target_floor</text>
<text x="389" y="699.7" font-family="Liberation Sans" font-size="9.6" font-weight="normal" fill="#111" textLength="62.1" lengthAdjust="spacing">halt_elevator</text>
<text x="425.9" y="729" font-family="Liberation Sans" font-size="9.6" font-weight="normal" fill="#333" textLength="27.2" lengthAdjust="spacing">power</text></svg>
</div>
<div class="abs" style="left:1051px;top:356px;width:35px;height:29px;border-radius:7px;background:#fff;border:1px solid #e5e7eb;box-shadow:0 1px 2px rgba(0,0,0,.06)"></div>
<svg class="abs" style="left:1061px;top:363px" width="14" height="14" viewBox="0 0 14 14"><circle cx="6.3" cy="6.3" r="4.8" fill="none" stroke="#6b7280" stroke-width="1.1"/><path d="M9.8 9.8L13 13M4.3 6.3h4M6.3 4.3v4" stroke="#6b7280" stroke-width="1.1"/></svg>
<div class="abs" style="left:1051px;top:392px;width:35px;height:29px;border-radius:7px;background:#fff;border:1px solid #e5e7eb;box-shadow:0 1px 2px rgba(0,0,0,.06)"></div>
<svg class="abs" style="left:1061px;top:399px" width="14" height="14" viewBox="0 0 14 14"><circle cx="6.3" cy="6.3" r="4.8" fill="none" stroke="#6b7280" stroke-width="1.1"/><path d="M9.8 9.8L13 13M4.3 6.3h4" stroke="#6b7280" stroke-width="1.1"/></svg>
<div class="abs" style="left:1051px;top:428px;width:35px;height:29px;border-radius:7px;background:#fff;border:1px solid #e5e7eb;box-shadow:0 1px 2px rgba(0,0,0,.06)"></div>
<svg class="abs" style="left:1061px;top:435px" width="14" height="14" viewBox="0 0 14 14"><path d="M3.2 4.2A5 5 0 1 1 2.3 8" fill="none" stroke="#6b7280" stroke-width="1.1"/><path d="M2.6 1.8v3h3" fill="none" stroke="#6b7280" stroke-width="1.1"/></svg>
<div class="abs" style="left:1051px;top:464px;width:35px;height:29px;border-radius:7px;background:#fff;border:1px solid #e5e7eb;box-shadow:0 1px 2px rgba(0,0,0,.06)"></div>
<svg class="abs" style="left:1061px;top:471px" width="14" height="14" viewBox="0 0 14 14"><path d="M1.5 1.5l3.3 3.3M1.5 1.5v3M1.5 1.5h3M12.5 1.5l-3.3 3.3M12.5 1.5v3M12.5 1.5h-3M1.5 12.5l3.3-3.3M1.5 12.5v-3M1.5 12.5h3M12.5 12.5l-3.3-3.3M12.5 12.5v-3M12.5 12.5h-3" fill="none" stroke="#6b7280" stroke-width="1.1"/></svg>
<div class="abs" style="left:1051px;top:500px;width:35px;height:29px;border-radius:7px;background:#fff;border:1px solid #e5e7eb;box-shadow:0 1px 2px rgba(0,0,0,.06)"></div>
<svg class="abs" style="left:1061px;top:507px" width="14" height="14" viewBox="0 0 14 14"><path d="M1.5 4.5v-3h3M9.5 1.5h3v3M12.5 9.5v3h-3M4.5 12.5h-3v-3" fill="none" stroke="#6b7280" stroke-width="1.1"/></svg>
<div class="abs" style="left:1166px;top:179px;width:16px;height:559px;background:#fafafa"></div>
<svg class="abs" style="left:1170px;top:184px" width="10" height="8"><path d="M0.8 6.8 L5 0.8 L9.2 6.8Z" fill="#8c8c8c" stroke="#8c8c8c" stroke-width="0.8" stroke-linejoin="round"/></svg>
<div class="abs" style="left:1170px;top:197px;width:9px;height:43px;border-radius:4.5px;background:#8c8c8c"></div>
<svg class="abs" style="left:1170px;top:727px" width="10" height="8"><path d="M0.8 1.2 L5 7.2 L9.2 1.2Z" fill="#8c8c8c" stroke="#8c8c8c" stroke-width="0.8" stroke-linejoin="round"/></svg>
<div class="abs" style="left:230px;top:738px;width:952px;height:87px;background:#fff;border-top:1px solid #e5e7eb"></div>
<div class="abs" style="left:252px;top:753px;width:862px;height:58px;border-radius:13px;background:#fff;border:1px solid #e0e3e8;box-shadow:0 1px 2px rgba(0,0,0,.05)"></div>
<svg class="abs" style="left:1172px;top:815px;z-index:9" width="10" height="10" viewBox="0 0 10 10"><path d="M10 3 A7 7 0 0 1 3 10 H10Z" fill="#a0a0a0"/></svg>
<svg class="abs" style="left:0px;top:815px;z-index:9" width="10" height="10" viewBox="0 0 10 10"><path d="M0 3 A7 7 0 0 0 7 10 H0Z" fill="#a0a0a0"/></svg>
<div class="t" style="left:267px;top:767.50px;font-size:13px;line-height:13px;color:#6b7280;font-weight:normal;transform:scaleX(0.9470);transform-origin:0 0;">Type your message... (Enter to send, Shift+Enter for new line)</div>
<div class="abs" style="left:1124px;top:775px;width:36px;height:36px;border-radius:50%;background:#a5bffb"></div>
<svg class="abs" style="left:1134px;top:785px" width="16" height="16" viewBox="0 0 16 16"><path d="M14 2L1.8 6.8l5 2.2 2.3 5z M14 2L6.8 9" fill="none" stroke="#fff" stroke-width="1.2" stroke-linejoin="round"/></svg>
</body></html>
